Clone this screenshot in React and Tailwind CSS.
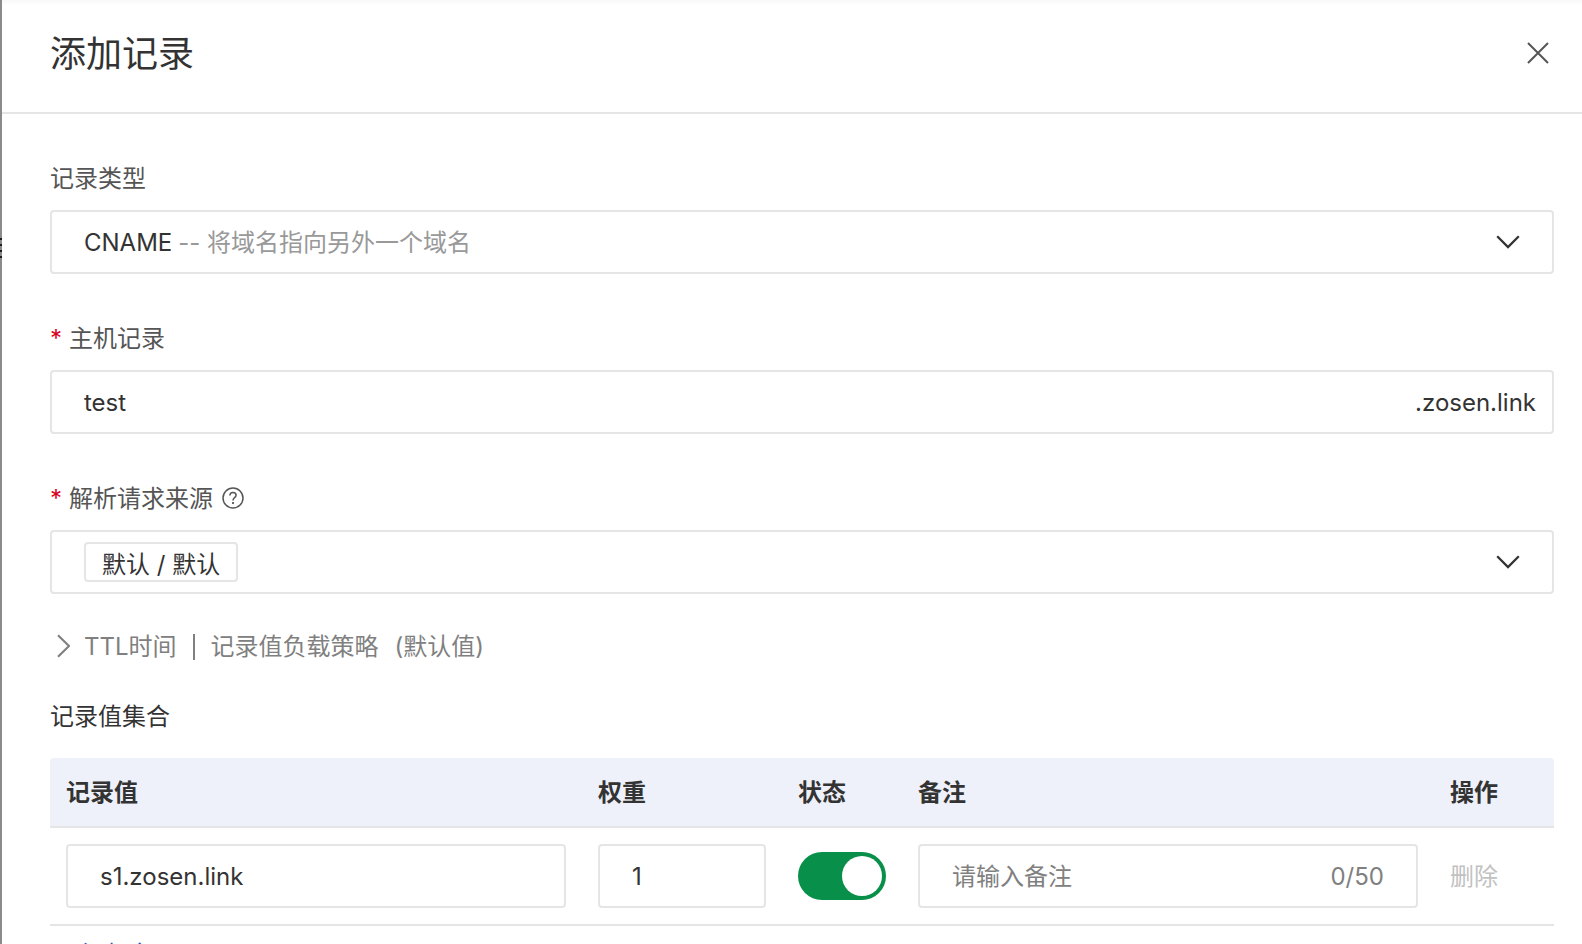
import { useState } from "react";

function Chevron() {
  return (
    <svg viewBox="0 0 24 14" className="pointer-events-none h-3.5 w-6 shrink-0" fill="none" stroke="#333" strokeWidth="2.3" aria-hidden="true">
      <path d="M1.2 1.2 12 12 22.8 1.2" />
    </svg>
  );
}

function Required() {
  return <span className="w-[19px] font-['Inter'] text-[#d9001b]">*</span>;
}

const box = "flex h-16 items-center rounded border-2 border-[#e5e5e5] bg-white pl-8";
const cellInput = "block h-16 w-full rounded border-2 border-[#e5e5e5] bg-white px-8 outline-none";

export default function App() {
  const [host, setHost] = useState("test");
  const [value, setValue] = useState("s1.zosen.link");
  const [weight, setWeight] = useState("1");
  const [enabled, setEnabled] = useState(true);
  const [note, setNote] = useState("");

  return (
    <div className="flex h-screen overflow-hidden font-['Inter','Noto_Sans_CJK_SC',sans-serif] text-2xl leading-[34px] text-[#333]">
      {/* dimmed page behind the drawer */}
      <div className="flex w-0.5 shrink-0 flex-col gap-1 bg-[#8a8a8b] pt-[238px]" aria-hidden="true">
        <span className="h-0.5 bg-[#1c1c1e]" />
        <span className="h-0.5 bg-[#1c1c1e]" />
        <span className="h-0.5 bg-[#1c1c1e]" />
        <span className="h-0.5 bg-[#1c1c1e]" />
      </div>

      <section className="min-w-0 flex-1 overflow-hidden bg-white" aria-label="添加记录">
        <header className="flex h-[114px] items-center justify-between border-b-2 border-[#e5e5e5] bg-linear-to-b from-[#f8f8f8] to-white to-[6px] pr-[33px] pb-1.5 pl-12">
          <h1 className="pt-0.5 text-4xl leading-[48px]">添加记录</h1>
          <button type="button" aria-label="关闭" className="p-0">
            <svg viewBox="0 0 22 22" className="size-[22px]" fill="none" stroke="#555" strokeWidth="2" aria-hidden="true">
              <path d="M1 1 21 21M21 1 1 21" />
            </svg>
          </button>
        </header>

        <form className="pt-12 pr-7 pl-12" onSubmit={(e) => e.preventDefault()}>
          <div className="flex flex-col gap-12">
            <div className="flex flex-col gap-3.5">
              <label htmlFor="type" className="text-[#555]">记录类型</label>
              <div className={`${box} pr-8`}>
                <select id="type" className="appearance-none bg-transparent pt-0.5 [field-sizing:content] outline-none">
                  <option>CNAME</option>
                </select>
                <span className="flex-1 pt-0.5 pl-1.5 text-[#999]">-- 将域名指向另外一个域名</span>
                <Chevron />
              </div>
            </div>

            <div className="flex flex-col gap-3.5">
              <label htmlFor="host" className="flex text-[#555]"><Required />主机记录</label>
              <div className={`${box} pt-0.5 pr-4`}>
                <input id="host" value={host} onChange={(e) => setHost(e.target.value)} className="min-w-0 flex-1 outline-none" />
                <span>.zosen.link</span>
              </div>
            </div>

            <div className="flex flex-col gap-3.5">
              <div className="flex items-center text-[#555]">
                <label htmlFor="source" className="flex"><Required />解析请求来源</label>
                <svg viewBox="0 0 22 22" className="mb-0.5 ml-[9px] size-[22px]" fill="none" stroke="#555" strokeWidth="1.5" aria-hidden="true">
                  <circle cx="11" cy="11" r="10" />
                  <path d="M7.9 8.6C7.9 6.6 9.2 5.5 11 5.5s3.1 1.1 3.1 2.8c0 2.3-3.1 2.5-3.1 5.1" />
                  <path d="M11 15v1.9" strokeWidth="1.8" />
                </svg>
              </div>
              <div className={`${box} justify-between pr-8`}>
                <select id="source" className="h-10 appearance-none rounded border-2 border-[#e5e5e5] bg-transparent px-4 pt-1 [field-sizing:content] outline-none">
                  <option>默认 / 默认</option>
                </select>
                <Chevron />
              </div>
            </div>
          </div>

          <button type="button" aria-expanded="false" className="mt-9 flex items-center pl-1.5 text-[#808080]">
            <svg viewBox="0 0 14 24" className="mr-3.5 mb-0.5 h-6 w-3.5" fill="none" stroke="#808080" strokeWidth="2.2" aria-hidden="true">
              <path d="M2 1.2 13 12 2 22.8" />
            </svg>
            <span>TTL时间</span>
            <span className="mx-4 h-[26px] w-0.5 bg-[#808080]" />
            <span>记录值负载策略</span>
            <span className="ml-4">(默认值)</span>
          </button>

          <h2 className="mt-9 mb-6">记录值集合</h2>

          <table className="w-full table-fixed border-separate border-spacing-0 text-left">
            <colgroup>
              <col />
              <col className="w-[200px]" />
              <col className="w-[120px]" />
              <col />
              <col className="w-[120px]" />
            </colgroup>
            <thead>
              <tr className="h-[70px] [&>th]:border-b-2 [&>th]:border-[#e5e5e5] [&>th]:bg-[#eef1f9] [&>th]:px-4 [&>th]:pt-0.5 [&>th]:font-bold">
                <th className="rounded-tl">记录值</th>
                <th>权重</th>
                <th>状态</th>
                <th>备注</th>
                <th className="rounded-tr">操作</th>
              </tr>
            </thead>
            <tbody>
              <tr className="[&>td]:border-b-2 [&>td]:border-[#e5e5e5] [&>td]:px-4 [&>td]:py-4">
                <td>
                  <input aria-label="记录值" value={value} onChange={(e) => setValue(e.target.value)} className={cellInput} />
                </td>
                <td>
                  <input aria-label="权重" value={weight} onChange={(e) => setWeight(e.target.value)} className={cellInput} />
                </td>
                <td>
                  <button
                    type="button"
                    role="switch"
                    aria-label="状态"
                    aria-checked={enabled}
                    onClick={() => setEnabled(!enabled)}
                    className="flex h-12 w-[88px] items-center rounded-full bg-[#bbb] p-1 aria-checked:justify-end aria-checked:bg-[#088f4a]"
                  >
                    <span className="size-10 rounded-full bg-white" />
                  </button>
                </td>
                <td>
                  <div className={`${box} pt-0.5 pr-8 text-[#808080]`}>
                    <input
                      aria-label="备注"
                      maxLength={50}
                      placeholder="请输入备注"
                      value={note}
                      onChange={(e) => setNote(e.target.value)}
                      className="min-w-0 flex-1 outline-none placeholder:text-[#808080]"
                    />
                    <span>{note.length}/50</span>
                  </div>
                </td>
                <td>
                  <button type="button" disabled className="block pt-0.5 text-[#c1c1c1]">删除</button>
                </td>
              </tr>
            </tbody>
          </table>

          <button type="button" className="mt-3 ml-8 block text-[#1f5fc0]">添加条目</button>
        </form>
      </section>
    </div>
  );
}
